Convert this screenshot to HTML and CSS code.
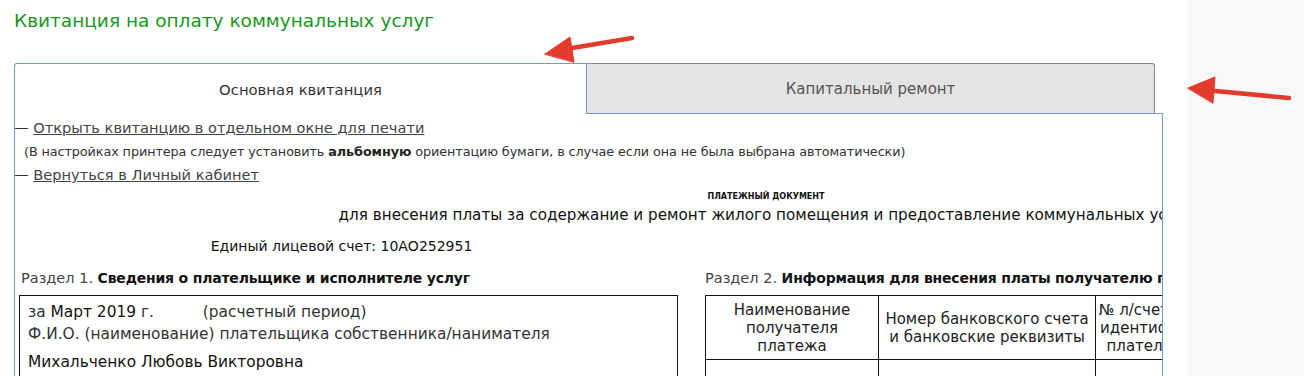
FILE: index.html
```html
<!doctype html>
<html lang="ru">
  <head>
    <meta charset="UTF-8" />
    <meta name="viewport" content="width=device-width, initial-scale=1.0" />
    <title>Квитанция на оплату коммунальных услуг</title>
    <link rel="stylesheet" href="styles.css">
  </head>
  <body>
    <div class="page">
      <main class="main">
        <h1>Квитанция на оплату коммунальных услуг</h1>

        <div class="tabs">
          <div class="tab tab-active">Основная квитанция</div>
          <div class="tab">Капитальный ремонт</div>
        </div>

        <div class="panel">
          <div class="links">
            <div>— <a href="#">Открыть квитанцию в отдельном окне для печати</a></div>
            <div class="note">
              (В настройках принтера следует установить <b>альбомную</b> ориентацию
              бумаги, в случае если она не была выбрана автоматически)
            </div>
            <div>— <a href="#">Вернуться в Личный кабинет</a></div>
          </div>

          <div class="doc">
            <div class="doc-type">ПЛАТЕЖНЫЙ ДОКУМЕНТ</div>
            <div class="doc-title">
              для внесения платы за содержание и ремонт жилого помещения и
              предоставление коммунальных услуг
            </div>

            <div class="doc-cols">
              <div class="col-left">
                <div class="account">Единый лицевой счет: 10АО252951</div>
                <div class="section-head">
                  Раздел 1. <b>Сведения о плательщике и исполнителе услуг</b>
                </div>
                <div class="payer">
                  <div>
                    за <b>Март 2019</b> г.
                    <span class="period">(расчетный период)</span>
                  </div>
                  <div>Ф.И.О. (наименование) плательщика собственника/нанимателя</div>
                  <div class="payer-name">Михальченко Любовь Викторовна</div>
                </div>
              </div>

              <div class="col-right">
                <div class="section-head">
                  Раздел 2. <b>Информация для внесения платы получателю платежа (получателям платежей)</b>
                </div>
                <table class="bank">
                  <tr>
                    <th class="c1">Наименование получателя платежа</th>
                    <th class="c2">Номер банковского счета и банковские реквизиты</th>
                    <th class="c3">№ л/счета (иной идентификатор плательщика)</th>
                    <th class="c4">Вид услуги</th>
                    <th class="c5">Сумма к оплате за расчетный период, руб.</th>
                  </tr>
                  <tr>
                    <td></td>
                    <td></td>
                    <td></td>
                    <td></td>
                    <td></td>
                  </tr>
                </table>
              </div>
            </div>
          </div>
        </div>
      </main>
      <aside class="side"></aside>
    </div>

    <!-- annotation arrows drawn over the page -->
    <svg class="arrows" width="1304" height="376" viewBox="0 0 1304 376">
      <g fill="#e23b2e" stroke="#e23b2e" stroke-linecap="round" stroke-linejoin="round">
        <line x1="632" y1="38" x2="560" y2="50" stroke-width="4.5" />
        <polygon points="545,54 570,37 574,62" stroke-width="1" />
        <line x1="1289" y1="98" x2="1205" y2="90" stroke-width="4.5" />
        <polygon points="1188,88 1215,77 1213,103" stroke-width="1" />
      </g>
    </svg>
  </body>
</html>
```

FILE: styles.css
```css
:root {
  --green: #17971b;
  --tab-border: #6f9bcb;
  --text-color: #333333;
}

body {
  margin: 0;
  font-family: "DejaVu Sans", "Noto Sans", sans-serif;
  color: var(--text-color);
  background-color: #ffffff;
}

.page {
  display: flex;
  height: 376px;
  overflow: hidden;
}

.main {
  width: 1174px;
  padding-left: 14px;
  flex-shrink: 0;
}

.side {
  flex: 1;
  background-color: #f8f8f8;
}

h1 {
  margin: 9px 0 0;
  font-size: 18.5px;
  font-weight: normal;
  line-height: 24px;
  color: var(--green);
}

.tabs {
  display: flex;
  margin-top: 30px;
}

.tab {
  box-sizing: border-box;
  width: 568px;
  height: 50px;
  display: flex;
  align-items: center;
  justify-content: center;
  font-size: 15px;
  color: #555555;
  background-color: #e4e4e4;
  border-top: 1px solid #888888;
  border-right: 1px solid #888888;
  border-top-right-radius: 3px;
}

.tab-active {
  width: 573px;
  height: 51px;
  margin-bottom: -1px;
  font-size: 14.8px;
  color: #333333;
  background-color: #ffffff;
  border: 1px solid var(--tab-border);
  border-bottom: none;
  border-radius: 3px 0 0 0;
  position: relative;
  z-index: 1;
}

.panel {
  width: 1149px;
  box-sizing: border-box;
  height: 300px;
  border: 1px solid var(--tab-border);
  border-bottom: none;
  overflow: hidden;
}

.links {
  margin-left: -1px;
  padding-top: 2px;
  font-size: 14.6px;
  line-height: 23.5px;
}

.links a {
  color: #444444;
}

.note {
  padding-left: 10px;
  font-size: 12.8px;
  white-space: nowrap;
  letter-spacing: -0.1px;
}

.note b {
  color: #222222;
}

.doc {
  width: 1494px;
  margin-left: 4px;
  color: #111111;
}

.doc-type {
  margin-top: 4px;
  font-size: 8px;
  font-weight: bold;
  line-height: 12px;
  text-align: center;
}

.doc-title {
  margin-top: 2px;
  font-size: 15.2px;
  line-height: 20px;
  text-align: center;
  white-space: nowrap;
}

.doc-cols {
  display: flex;
  gap: 27px;
}

.col-left {
  width: 659px;
  flex-shrink: 0;
}

.col-right {
  flex: 1;
}

.account {
  margin-top: 11px;
  font-size: 14px;
  line-height: 20px;
  text-align: center;
  padding-right: 14px;
}

.section-head {
  margin-top: 12px;
  font-size: 14.5px;
  line-height: 20px;
  color: #444444;
  white-space: nowrap;
}

.col-left .section-head {
  margin-left: 2px;
}

.col-right .section-head {
  margin-top: 43px;
}

.section-head b {
  color: #111111;
  font-size: 14px;
  letter-spacing: -0.2px;
}

.payer {
  margin-top: 7px;
  border: 1px solid #111111;
  border-bottom: none;
  padding: 5px 8px 10px;
  font-size: 15.4px;
  line-height: 22px;
  color: #333333;
}

.payer b {
  font-weight: normal;
  color: #111111;
}

.period {
  margin-left: 44px;
}

.payer-name {
  margin-top: 6px;
  color: #111111;
}

.bank {
  margin-top: 7px;
  border-collapse: collapse;
  font-size: 15px;
  line-height: 18px;
  color: #222222;
}

.bank th,
.bank td {
  border: 1px solid #111111;
  font-weight: normal;
  padding: 5px 2px 4px;
  text-align: center;
  vertical-align: middle;
}

.bank .c1 {
  padding: 5px 14px 4px;
}

.bank td {
  height: 40px;
}

.c1 {
  width: 144px;
}

.c2 {
  width: 212px;
}

.c3 {
  width: 130px;
}

.c4 {
  width: 120px;
}

.c5 {
  width: 140px;
}

.arrows {
  position: absolute;
  top: 0;
  left: 0;
  pointer-events: none;
}
```
